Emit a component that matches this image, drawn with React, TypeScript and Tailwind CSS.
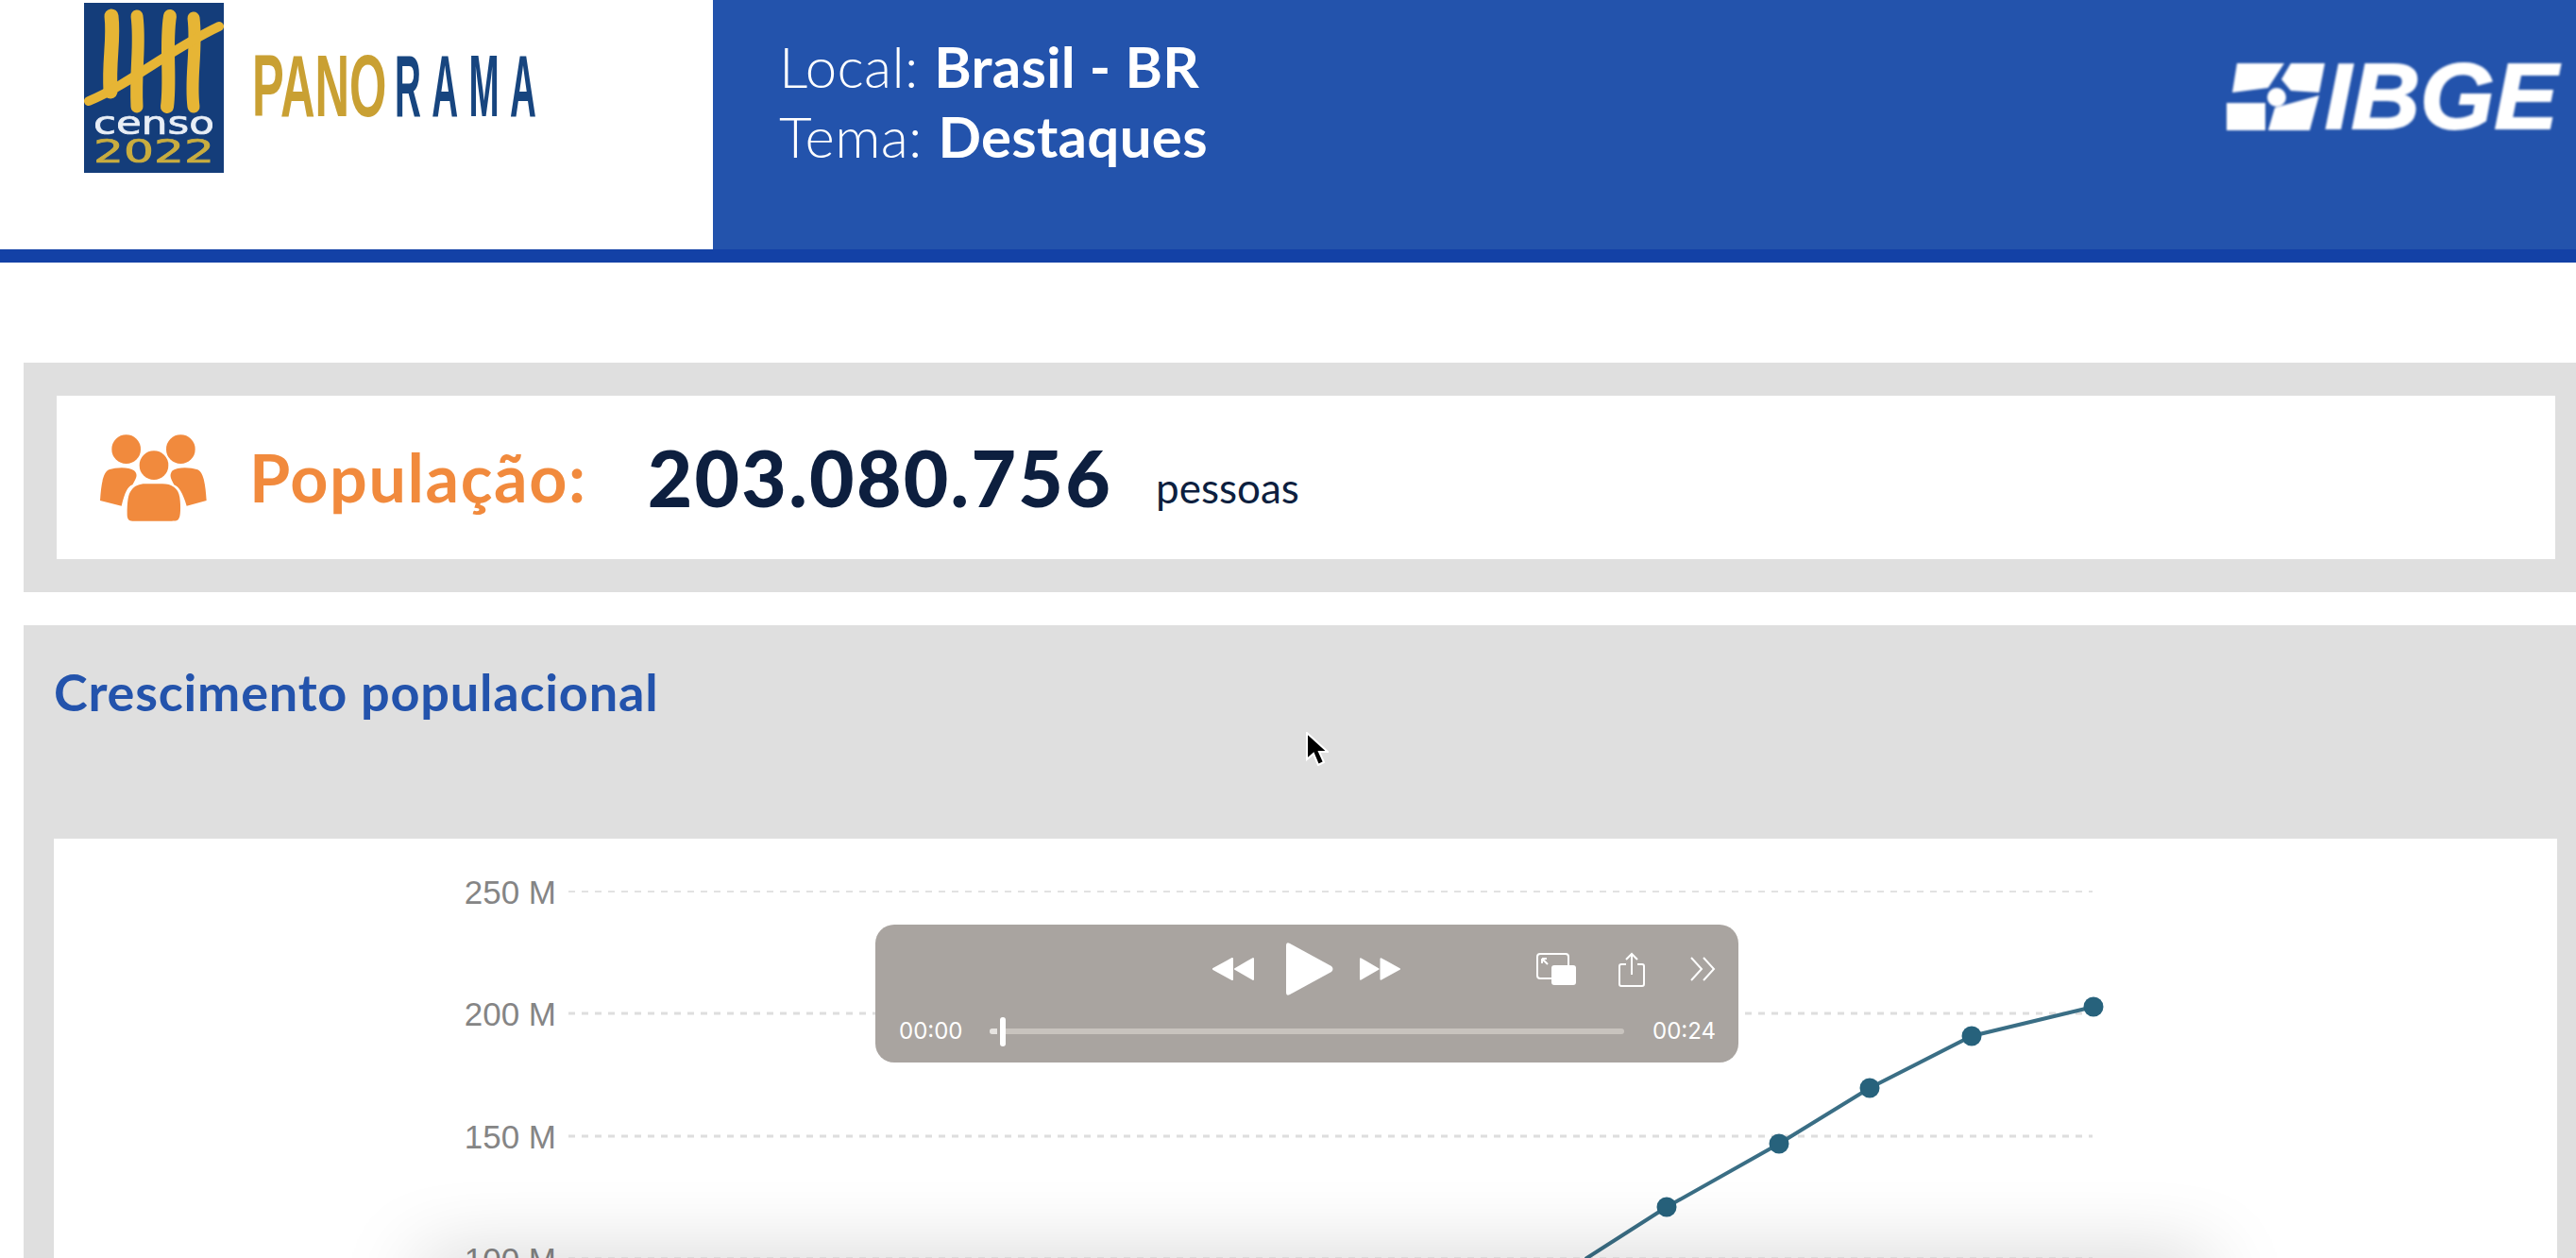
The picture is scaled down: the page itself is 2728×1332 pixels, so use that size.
const RW = '"Lato","Open Sans",sans-serif';

function CensoLogo() {
  return (
    <svg width="148" height="180" viewBox="0 0 148 180" className="blur-[0.6px]">
      <rect width="148" height="180" fill="#143d7a" />
      <g stroke="#e6b535" strokeLinecap="round" fill="none">
        <path d="M29 14 C 32 40, 26 60, 28 94" strokeWidth="15" />
        <path d="M56 14 C 60 45, 54 70, 56 110" strokeWidth="13" />
        <path d="M91 14 C 86 45, 92 80, 88 110" strokeWidth="14" />
        <path d="M116 16 C 120 50, 112 80, 116 110" strokeWidth="13" />
        <path d="M5 104 C 50 85, 90 50, 143 25" strokeWidth="10" />
      </g>
      <text x="74" y="139" textAnchor="middle" fontFamily="DejaVu Sans" fontSize="33" fill="#e8eef6" stroke="#e8eef6" strokeWidth="0.7" textLength="128" lengthAdjust="spacingAndGlyphs">censo</text>
      <text x="74" y="169" textAnchor="middle" fontFamily="DejaVu Sans" fontSize="33" fill="#c9ad3f" stroke="#c9ad3f" strokeWidth="0.7" textLength="128" lengthAdjust="spacingAndGlyphs">2022</text>
    </svg>
  );
}

function PanoramaLogo() {
  return (
    <svg width="304" height="72" viewBox="0 0 304 72" className="blur-[0.7px]">
      <text transform="translate(0 66) scale(0.55 1)" fontFamily="Liberation Sans" fontWeight="700" fontSize="92" fill="#c9a033">PANO</text>
      <text transform="translate(151 66) scale(0.42 1)" fontFamily="Liberation Sans" fontWeight="700" fontSize="92" letterSpacing="27" fill="#17457f">RAMA</text>
    </svg>
  );
}

function IbgeLogo() {
  return (
    <div className="flex items-center w-[354px] h-[72px] blur-[0.8px]">
      <svg width="104" height="71" viewBox="0 0 104 71" className="shrink-0" fill="#fff">
        <path d="M11 0 H61 L44 26 L6 31 Z" />
        <path d="M68 0 H104 L98 31 L68 29 L58 17 Z" />
        <path d="M0 42 H41 V71 H0 Z" />
        <path d="M51 47 L98 34 L88 71 H44 Z" />
        <circle cx="53" cy="36" r="10" />
      </svg>
      <span className="font-['Liberation_Sans'] font-bold italic text-[98px] leading-[72px] text-white scale-x-[1.03] origin-left [-webkit-text-stroke:2px_white]">IBGE</span>
    </div>
  );
}

function PeopleIcon() {
  return (
    <svg width="113" height="92" viewBox="47 35 339 276" className="shrink-0">
      <g fill="#f18a3d">
        <circle cx="130" cy="82" r="46" />
        <circle cx="303" cy="82" r="46" />
        <circle cx="218" cy="133" r="46" />
        <path d="M133 290 C 133 250 136 225 146 213 C 156 198 172 192 190 192 H245 C 275 192 295 205 300 235 C 304 265 302 295 298 300 C 296 310 285 310 275 310 H150 C 138 310 133 303 133 290 Z" />
        <path d="M47 245 C 50 200 55 155 75 147 C 100 138 140 138 155 150 C 170 165 160 175 150 195 C 135 200 125 220 115 262 Z" />
        <path d="M385 245 C 382 200 377 155 357 147 C 332 138 292 138 277 150 C 265 165 272 175 282 195 C 297 200 310 222 322 262 Z" />
      </g>
    </svg>
  );
}

const points: [number, number][] = [
  [1679, 1333],
  [1765, 1278],
  [1884, 1211],
  [1980, 1152],
  [2088, 1097],
  [2217, 1066],
];

function Chart() {
  const labels: [string, number, number, string][] = [
    ['250 M', 944, 2, '#e2e2e2'],
    ['200 M', 1073, 3, '#dedede'],
    ['150 M', 1203, 3, '#dedede'],
    ['100 M', 1333, 3, '#dedede'],
  ];
  return (
    <svg width="2651" height="444" viewBox="57 888 2651 444" className="block">
      {labels.map(([t, y, w, c]) => (
        <g key={t}>
          <text x="589" y={y + 13} textAnchor="end" fontFamily="Liberation Sans" fontSize="35" fill="#858585">
            {t}
          </text>
          <line x1="602" x2="2216" y1={y} y2={y} stroke={c} strokeWidth={w} strokeDasharray="7 7" />
        </g>
      ))}
      <polyline points={points.map((p) => p.join(',')).join(' ')} fill="none" stroke="#3a6e85" strokeWidth="4" />
      {points.slice(1).map(([x, y]) => (
        <circle key={x} cx={x} cy={y} r="10.5" fill="#27627c" />
      ))}
    </svg>
  );
}

function Player() {
  return (
    <div className="absolute left-[870px] top-[91px] w-[914px] h-[146px] rounded-[20px] bg-[#a9a4a0] text-white font-['Inter',sans-serif]">
      <div className="flex items-center h-[56px] mt-[19px]">
        <svg width="46" height="26" viewBox="0 0 46 26" className="ml-[356px] shrink-0" fill="#fff" stroke="#fff" strokeWidth="2" strokeLinejoin="round">
          <path d="M22 2 L2 13 L22 24 Z" />
          <path d="M44 2 V24 L25 13 Z" />
        </svg>
        <svg width="50" height="56" viewBox="0 0 50 56" className="ml-[33px] shrink-0" fill="#fff">
          <path d="M0 3 Q0 -1 4 1 L48 25 Q51 28 48 31 L4 55 Q0 57 0 53 Z" />
        </svg>
        <svg width="45" height="26" viewBox="0 0 46 26" className="ml-[27px] shrink-0" fill="#fff" stroke="#fff" strokeWidth="2" strokeLinejoin="round">
          <path d="M2 2 V24 L21 13 Z" />
          <path d="M24 2 V24 L44 13 Z" />
        </svg>
        <svg width="42" height="34" viewBox="0 0 42 34" className="ml-[143px] shrink-0">
          <rect x="1" y="1" width="33" height="26" rx="3" fill="none" stroke="#fff" strokeWidth="2" />
          <path d="M6 6 L12 12 M6 6 h5 M6 6 v5" stroke="#fff" strokeWidth="2" fill="none" />
          <rect x="16" y="13" width="26" height="21" rx="3" fill="#fff" />
        </svg>
        <svg width="28" height="37" viewBox="0 0 28 37" className="ml-[45px] shrink-0" fill="none" stroke="#fff" strokeWidth="2">
          <path d="M8 13 H3 Q1 13 1 15 V34 Q1 36 3 36 H25 Q27 36 27 34 V15 Q27 13 25 13 H20" />
          <path d="M14 24 V2 M8 8 L14 2 L20 8" />
        </svg>
        <svg width="28" height="26" viewBox="0 0 28 26" className="ml-[47px] shrink-0" fill="none" stroke="#fff" strokeWidth="2">
          <path d="M2 1 L13 13 L2 25 M15 1 L26 13 L15 25" />
        </svg>
      </div>
      <div className="flex items-center h-[31px] mt-[22px] pl-[25px] text-[24px] leading-none">
        <span className="w-[65px] text-center">00:00</span>
        <div className="relative ml-[31px] w-[672px] h-[6px] rounded-full bg-[#c8c3be]">
          <div className="absolute left-0 top-0 h-[6px] w-[8px] rounded-l-full bg-[#e6e3e0]" />
          <div className="absolute left-[8px] top-0 h-[6px] w-[9px] bg-[#a9a4a0]" />
          <div className="absolute left-[11px] top-[-12px] h-[31px] w-[6px] rounded-full bg-white" />
        </div>
        <span className="ml-[30px] w-[66px] text-center">00:24</span>
      </div>
    </div>
  );
}

export default function App() {
  return (
    <div className="relative w-[2728px] h-[1332px] overflow-hidden bg-white" style={{ fontFamily: RW }}>
      <header className="flex h-[278px] border-b-[14px] border-[#1341a6] bg-[#2353ac]">
        <div className="flex w-[755px] items-start bg-white pl-[89px] pt-[3px]">
          <CensoLogo />
          <div className="ml-[30px] mt-[54px]">
            <PanoramaLogo />
          </div>
        </div>
        <div className="flex flex-1 items-start justify-between pl-[70px] pr-[16px] pt-[33px]">
          <div className="text-[60px] leading-[74px] text-white tracking-[0.3px]">
            <div>
              <span className="font-light">Local: </span>
              <span className="font-bold">Brasil - BR</span>
            </div>
            <div>
              <span className="font-light">Tema: </span>
              <span className="font-bold">Destaques</span>
            </div>
          </div>
          <div className="mt-[33px]">
            <IbgeLogo />
          </div>
        </div>
      </header>

      <main className="pl-[25px] pt-[106px]">
        <section className="h-[243px] bg-[#dfdfdf] pl-[35px] pr-[22px] pt-[35px]">
          <div className="flex h-[173px] items-center bg-white pl-[46px]">
            <PeopleIcon />
            <span className="ml-[45px] text-[70px] font-bold text-[#f18a3d] tracking-[1.6px]">População:</span>
            <span className="ml-[64px] text-[82px] font-black text-[#0d1f3f] tracking-[2.3px]">203.080.756</span>
            <span className="ml-[46px] mt-[20px] text-[44px] text-[#0d1f3f]">pessoas</span>
          </div>
        </section>

        <section className="mt-[35px] h-[670px] bg-[#dfdfdf] pl-[32px] pr-[20px]">
          <div className="flex h-[226px] items-start pt-[40px]">
            <h2 className="text-[54px] leading-[62px] font-bold text-[#2353ac] tracking-[0.8px]">Crescimento populacional</h2>
          </div>
          <div className="relative h-[444px] overflow-hidden bg-white">
            <div className="absolute left-[390px] top-[452px] h-[40px] w-[1890px] shadow-[0_0_85px_rgba(0,0,0,0.28)]" />
            <Chart />
            <Player />
          </div>
        </section>
      </main>

      <svg width="24" height="36" viewBox="0 0 24 36" className="absolute left-[1383px] top-[775px]">
        <path d="M1 1 V29 L8 23 L13 35 L19 32 L14 21 L23 21 Z" fill="#000" stroke="#fff" strokeWidth="2" />
      </svg>
    </div>
  );
}
